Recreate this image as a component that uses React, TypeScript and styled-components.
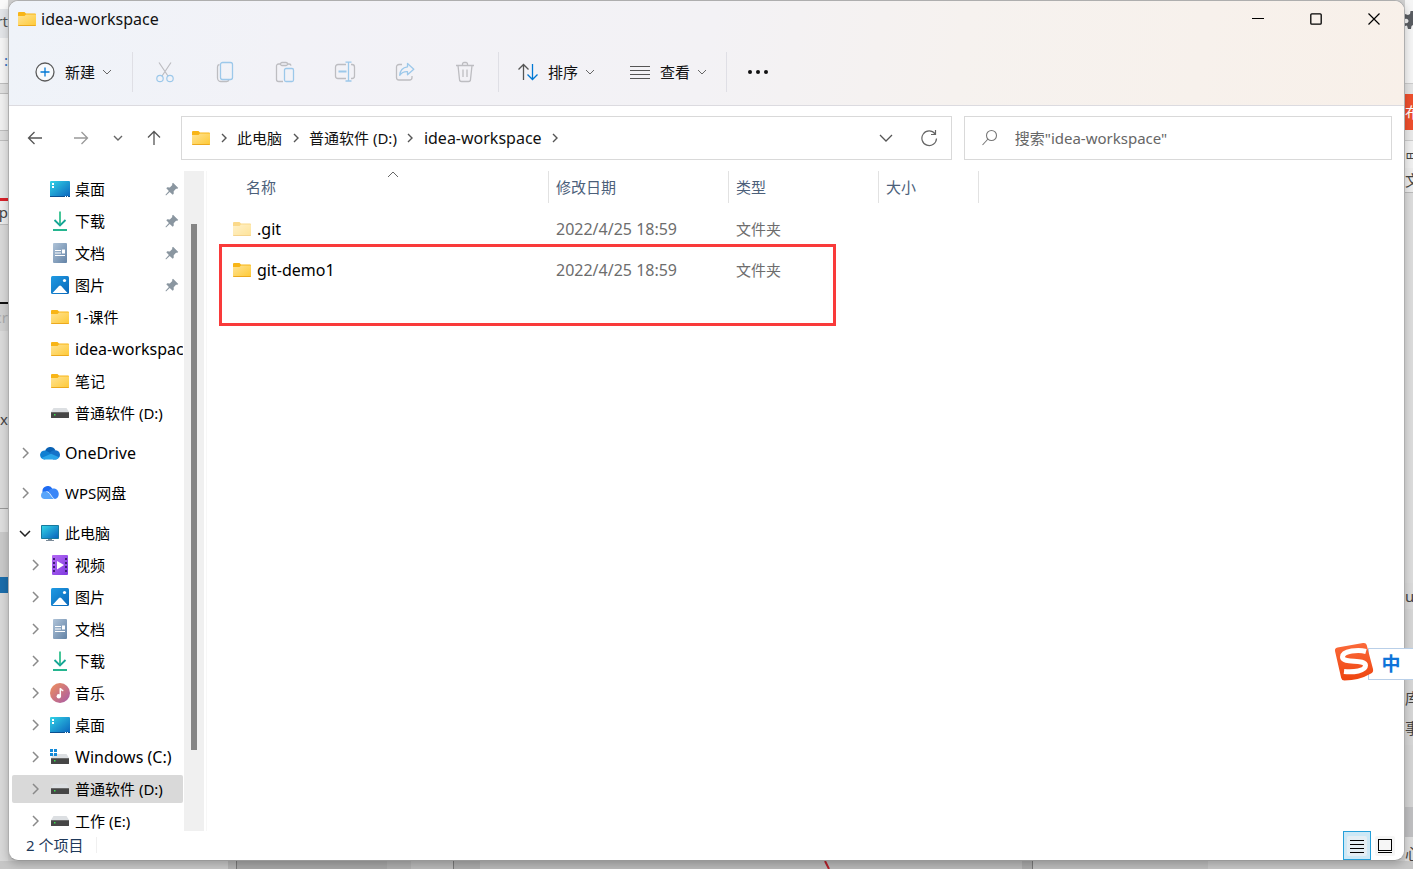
import React from "react";
import styled, { createGlobalStyle } from "styled-components";

const GlobalStyle = createGlobalStyle`
  * { box-sizing: border-box; }
  body {
    margin: 0;
    font-family: "Noto Sans", "Noto Sans CJK SC", sans-serif;
    font-size: 15px;
    color: #111;
  }
  button {
    border: 0;
    padding: 0;
    background: none;
    font: inherit;
    color: inherit;
    cursor: default;
  }
  ul, ol { margin: 0; padding: 0; list-style: none; }
  svg { display: block; flex: none; }
`;

/* ---------- desktop behind the window ---------- */

const Desktop = styled.div`
  position: relative;
  display: grid;
  grid-template-columns: 8px minmax(0, 1fr) 8px;
  grid-template-rows: minmax(0, 1fr) 8px;
  height: 100vh;
  overflow: hidden;
  background: #d2d2d2;
`;

const SideStrip = styled.div`
  display: flex;
  flex-direction: column;
  min-height: 0;
  overflow: hidden;
`;

const BottomStrip = styled.div`
  grid-column: 1 / -1;
  display: flex;
  overflow: hidden;
`;

const Patch = styled.div<{ $h: number; $bg: string; $color?: string; $side?: string }>`
  flex: none;
  height: ${(p) => p.$h}px;
  background: ${(p) => p.$bg};
  color: ${(p) => p.$color || "#444"};
  display: flex;
  align-items: center;
  justify-content: ${(p) => p.$side || "flex-end"};
  overflow: hidden;
  white-space: nowrap;
  line-height: 1;
`;

const Band = styled.div<{ $w?: number; $bg: string }>`
  flex: ${(p) => (p.$w ? `none` : `1`)};
  width: ${(p) => (p.$w ? `${p.$w}px` : "auto")};
  background: ${(p) => p.$bg};
  display: flex;
  justify-content: flex-end;
`;

/* ---------- window frame ---------- */

const Window = styled.main`
  position: relative;
  z-index: 1;
  display: flex;
  flex-direction: column;
  min-width: 0;
  min-height: 0;
  background: #fff;
  border: 1px solid #aeaeae;
  border-bottom-color: #999;
  border-radius: 10px;
  overflow: hidden;
  box-shadow: 0 3px 8px rgba(0, 0, 0, 0.22);
`;

const Header = styled.header`
  flex: none;
  border-bottom: 1px solid #dcdbe0;
  background: linear-gradient(100deg, #eff3f9 0%, #f2f2f7 20%, #f3f2f5 50%, #f6f2ef 68%, #f7f1ec 85%, #f8f0e9 100%);
`;

const TitleBar = styled.div`
  display: flex;
  align-items: center;
  height: 36px;
  padding: 0 1px 0 9px;
`;

const Title = styled.h1`
  flex: 1;
  margin: 0 0 0 5px;
  font-size: 16px;
  line-height: 20px;
  font-weight: 400;
`;

const CaptionButton = styled.button`
  display: grid;
  place-items: center;
  width: 58px;
  height: 36px;
`;

const Toolbar = styled.div`
  display: flex;
  align-items: center;
  height: 68px;
  padding: 1px 0 0 18px;
`;

const Command = styled.button<{ $w: number }>`
  display: flex;
  align-items: center;
  gap: 7px;
  width: ${(p) => p.$w}px;
  height: 40px;
  padding-left: 8px;
  & > span { margin-left: 3px; }
`;

const IconCommand = styled.button`
  display: grid;
  place-items: center;
  width: 60px;
  height: 40px;
`;

const Divider = styled.span<{ $before?: number; $after: number }>`
  width: 1px;
  height: 40px;
  margin: 0 ${(p) => p.$after}px 0 ${(p) => p.$before || 0}px;
  background: #dfdfe5;
`;

/* ---------- address row ---------- */

const AddressRow = styled.div`
  flex: none;
  display: flex;
  align-items: center;
  height: 65px;
  padding: 0 12px 1px 9px;
`;

const Fields = styled.div`
  flex: 1;
  min-width: 0;
  display: grid;
  grid-template-columns: minmax(0, 9fr) minmax(0, 5fr);
  gap: 12px;
`;

const NavButton = styled.button<{ $w: number }>`
  flex: none;
  display: grid;
  place-items: center;
  width: ${(p) => p.$w}px;
  height: 40px;
`;

const AddressBox = styled.nav`
  display: flex;
  align-items: center;
  height: 44px;
  padding-left: 10px;
  border: 1px solid #d9d9d9;
`;

const Crumbs = styled.ol`
  flex: 1;
  display: flex;
  align-items: center;
  white-space: nowrap;
  li { display: flex; align-items: center; }
`;

const Crumb = styled.a<{ $size?: number }>`
  font-size: ${(p) => p.$size || 15}px;
  line-height: 20px;
  color: #111;
  text-decoration: none;
`;

const CrumbArrow = styled.span`
  display: grid;
  place-items: center;
  width: 27px;
  height: 20px;
`;

const SearchBox = styled.label`
  display: flex;
  align-items: center;
  gap: 16px;
  height: 44px;
  padding-left: 16px;
  border: 1px solid #d9d9d9;
`;

const SearchInput = styled.input`
  flex: 1;
  min-width: 0;
  border: 0;
  padding: 0;
  outline: 0;
  background: none;
  font: inherit;
  color: #111;
  &::placeholder { color: #666; opacity: 1; }
`;

/* ---------- body ---------- */

const Body = styled.div`
  flex: 1;
  min-height: 0;
  display: flex;
`;

const Sidebar = styled.aside`
  flex: none;
  display: flex;
  width: 198px;
  border-right: 1px solid #f7f7f7;
  overflow: hidden;
`;

const Tree = styled.ul`
  width: 175px;
  padding: 2px 0 0 3px;
  overflow: hidden;
`;

const TreeRow = styled.li<{ $spaced?: boolean }>`
  margin-top: ${(p) => (p.$spaced ? 8 : 0)}px;
  padding: 2px 0;
`;

const TreeButton = styled.button<{ $top?: boolean; $selected?: boolean }>`
  display: flex;
  align-items: center;
  width: 171px;
  height: 28px;
  padding-left: ${(p) => (p.$top ? 5 : 15)}px;
  border-radius: 2px;
  background: ${(p) => (p.$selected ? "#d9d9d9" : "transparent")};
  line-height: 20px;
  white-space: nowrap;
  text-align: left;
`;

const Slot = styled.span<{ $w: number; $gap?: number }>`
  flex: none;
  display: grid;
  place-items: center;
  width: ${(p) => p.$w}px;
  margin-left: ${(p) => p.$gap || 0}px;
`;

const TreeLabel = styled.span<{ $latin: boolean }>`
  flex: 1;
  min-width: 0;
  margin-left: 5px;
  overflow: hidden;
  font-size: ${(p) => (p.$latin ? 16 : 15)}px;
  color: #000;
`;

const ScrollTrack = styled.div`
  width: 20px;
  padding: 53px 7px 0;
  background: #f0f0f0;
`;

const ScrollThumb = styled.div`
  width: 6px;
  height: 526px;
  background: #858585;
`;

const Files = styled.section`
  position: relative;
  flex: 1;
  min-width: 0;
  padding-left: 2px;
`;

const FileTable = styled.table`
  table-layout: fixed;
  width: 770px;
  border-collapse: separate;
  border-spacing: 0;
  tbody::before {
    content: "";
    display: block;
    height: 5px;
  }
`;

const Th = styled.th<{ $w: number; $pad: number }>`
  position: relative;
  width: ${(p) => p.$w}px;
  height: 32px;
  padding: 0 0 2px ${(p) => p.$pad}px;
  border-right: 1px solid #e2e2e2;
  text-align: left;
  font-weight: 400;
  color: #4c607a;
  svg {
    position: absolute;
    top: 0;
    left: 178px;
  }
`;

const Td = styled.td<{ $pad: number; $size?: number }>`
  height: 41px;
  padding: 0 0 0 ${(p) => p.$pad}px;
  font-size: ${(p) => p.$size || 15}px;
  line-height: 20px;
  color: #6d6d6d;
`;

const FileName = styled.span`
  display: flex;
  align-items: center;
  gap: 6px;
  color: #000;
`;

const Highlight = styled.div`
  position: absolute;
  top: 73px;
  left: 12px;
  width: 617px;
  height: 82px;
  border: 3px solid #f93a3a;
  pointer-events: none;
`;

const StatusBar = styled.footer`
  flex: none;
  display: flex;
  align-items: center;
  height: 29px;
  padding: 0 5px 0 17px;
  color: #1e395b;
`;

const Count = styled.span`
  width: 71px;
  height: 16px;
  margin: 0 auto 2px 0;
  border-right: 1px solid #f0f0f0;
  line-height: 16px;
`;

const ViewButton = styled.button<{ $on?: boolean }>`
  display: grid;
  place-items: center;
  width: 28px;
  height: 29px;
  border: 1px solid ${(p) => (p.$on ? "#26a0da" : "transparent")};
  background: ${(p) => (p.$on ? "#cce8f6" : "transparent")};
`;

/* ---------- input method badge ---------- */

const ImeBadge = styled.div`
  position: absolute;
  z-index: 2;
  right: 0;
  top: 642px;
  display: flex;
  align-items: center;
  height: 40px;
`;

const ImeMode = styled.button`
  width: 45px;
  height: 32px;
  margin: 4px 0 0 -6px;
  border: 1px solid #b9cfe8;
  border-right: 0;
  background: #fff;
  color: #0f74d9;
  font-size: 19px;
  line-height: 20px;
  font-weight: 700;
`;

const ImeLogo = styled.svg`
  position: relative;
`;

/* ---------- icons ---------- */

const Folder = ({ faded }: { faded?: boolean }) => (
  <svg width="18" height="14" viewBox="0 0 18 14" opacity={faded ? 0.5 : 1}>
    <defs>
      <linearGradient id="folderFace" x1="0" y1="0" x2="1" y2="1">
        <stop offset="0" stopColor="#ffe394" />
        <stop offset="1" stopColor="#fec935" />
      </linearGradient>
    </defs>
    <path d="M0 1a1 1 0 0 1 1-1h5.500L8 1.500h9a1 1 0 0 1 1 1V8H0z" fill="#f8b517" />
    <path d="M0 4h6.500L8 2.500h10V13a1 1 0 0 1-1 1H1a1 1 0 0 1-1-1z" fill="url(#folderFace)" />
    <path d="M0 13h18a1 1 0 0 1-1 1H1a1 1 0 0 1-1-1z" fill="#eca91e" />
  </svg>
);

const Chevron = ({ dir, size = 8, color = "#666", w = 1 }: { dir: "down" | "right" | "up"; size?: number; color?: string; w?: number }) => {
  const h = size / 2;
  const shapes = {
    down: { vb: [size + 2, h + 2], d: `M1 1l${h} ${h} ${h} ${-h}` },
    up: { vb: [size + 2, h + 2], d: `M1 ${h + 1}l${h} ${-h} ${h} ${h}` },
    right: { vb: [h + 2, size + 2], d: `M1 1l${h} ${h} ${-h} ${h}` },
  };
  const s = shapes[dir];
  return (
    <svg width={s.vb[0]} height={s.vb[1]} viewBox={`0 0 ${s.vb[0]} ${s.vb[1]}`} fill="none" stroke={color} strokeWidth={w}>
      <path d={s.d} />
    </svg>
  );
};

const GREY = "#bdbdc1";
const BLUE = "#9cc8ea";

const PlusIcon = () => (
  <svg width="20" height="20" viewBox="0 0 20 20" fill="none">
    <circle cx="10" cy="10" r="9" stroke="#5c5c5c" strokeWidth="1.300" fill="#f8fafc" />
    <path d="M10 5.500v9M5.500 10h9" stroke="#0078d4" strokeWidth="1.300" />
  </svg>
);

const CutIcon = () => (
  <svg width="20" height="22" viewBox="0 0 20 22" fill="none" strokeWidth="1.200">
    <path d="M4 1.500l9 13.500M16 1.500L7 15" stroke={GREY} />
    <circle cx="5" cy="17.500" r="3.200" stroke={BLUE} />
    <circle cx="15" cy="17.500" r="3.200" stroke={BLUE} />
  </svg>
);

const CopyIcon = () => (
  <svg width="18" height="22" viewBox="0 0 18 22" fill="none" strokeWidth="1.300">
    <path d="M3.500 3.500A2.500 2.500 0 0 0 1.500 6v11a3.500 3.500 0 0 0 3.500 3.500h5.500a2.500 2.500 0 0 0 2.400-1.800" stroke={GREY} />
    <rect x="4.500" y="1.500" width="12" height="17" rx="2" stroke={BLUE} />
  </svg>
);

const PasteIcon = () => (
  <svg width="20" height="22" viewBox="0 0 20 22" fill="none" strokeWidth="1.300">
    <path d="M6 3H3.500a2 2 0 0 0-2 2v13.500a2 2 0 0 0 2 2H8M12.500 3H14a2 2 0 0 1 2 1.700" stroke={GREY} />
    <rect x="5.500" y="1.500" width="7" height="3" rx="1.500" stroke={GREY} />
    <rect x="9.500" y="7.500" width="9" height="13" rx="1.500" stroke={BLUE} />
  </svg>
);

const RenameIcon = () => (
  <svg width="22" height="22" viewBox="0 0 22 22" fill="none" strokeWidth="1.300">
    <path d="M12 3.500H4A2.500 2.500 0 0 0 1.500 6v9A2.500 2.500 0 0 0 4 17.500h8M17 3.500h1A2.500 2.500 0 0 1 20.500 6v9a2.500 2.500 0 0 1-2.500 2.500h-1" stroke={GREY} />
    <path d="M14.500 1.500v18M11.500 1.200h6M11.500 20h6" stroke={BLUE} />
    <path d="M4.500 10.500h8" stroke={BLUE} strokeWidth="2" />
  </svg>
);

const ShareIcon = () => (
  <svg width="20" height="20" viewBox="0 0 20 20" fill="none" strokeWidth="1.300" strokeLinejoin="round">
    <path d="M7 2.500H4A2.500 2.500 0 0 0 1.500 5v10.500A2.500 2.500 0 0 0 4 18h10.500a2.500 2.500 0 0 0 2.500-2.500V14" stroke={GREY} />
    <path d="M12.500 1.500l6.300 5.700-6.300 5.600V9.700c-3.500-.2-6 1-7.800 3.600.3-4.600 3-7.900 7.800-8.500z" stroke={BLUE} />
  </svg>
);

const DeleteIcon = () => (
  <svg width="20" height="22" viewBox="0 0 20 22" fill="none" stroke={GREY} strokeWidth="1.300">
    <path d="M1 4.500h18M7.500 4V3a1.500 1.500 0 0 1 1.500-1.500h2A1.500 1.500 0 0 1 12.500 3v1M3 4.500l1.500 14a2 2 0 0 0 2 2h7a2 2 0 0 0 2-2L17 4.500M8 8.500v7.500M12 8.500v7.500" />
  </svg>
);

const SortIcon = () => (
  <svg width="20" height="18" viewBox="0 0 20 18" fill="none" strokeWidth="1.300">
    <path d="M5.500 17V1.500M.5 6.500l5-5 5 5" stroke="#555" />
    <path d="M14.500 1v15.500M9.500 11.500l5 5 5-5" stroke="#0078d4" />
  </svg>
);

const LinesIcon = () => (
  <svg width="20" height="14" viewBox="0 0 20 14" stroke="#555">
    <path d="M0 1.500h20M0 5.500h20M0 9.500h20M0 13.500h20" />
  </svg>
);

const DotsIcon = () => (
  <svg width="22" height="6" viewBox="0 0 22 6" fill="#111">
    <circle cx="3" cy="3" r="2" />
    <circle cx="11" cy="3" r="2" />
    <circle cx="19" cy="3" r="2" />
  </svg>
);

const ArrowIcon = ({ turn, color }: { turn: number; color: string }) => (
  <svg width="16" height="16" viewBox="0 0 16 16" fill="none" stroke={color} strokeWidth="1.300">
    <path d="M15 8H1.500M7.500 2l-6 6 6 6" transform={`rotate(${turn} 8 8)`} />
  </svg>
);

const RefreshIcon = () => (
  <svg width="18" height="18" viewBox="0 0 18 18" fill="none" stroke="#666" strokeWidth="1.200">
    <path d="M16.500 9.500A7.300 7.300 0 1 1 15 4.800M15.500 1v4.500H11" />
  </svg>
);

const MagnifierIcon = () => (
  <svg width="18" height="18" viewBox="0 0 18 18" fill="none" stroke="#777" strokeWidth="1.100">
    <circle cx="10.500" cy="6.500" r="5" />
    <path d="M7 10l-5.500 6" />
  </svg>
);

const DesktopIcon = () => (
  <svg width="20" height="16" viewBox="0 0 20 16">
    <defs>
      <linearGradient id="deskFace" x1="0" y1="0" x2="1" y2="1">
        <stop offset="0" stopColor="#32d3e6" />
        <stop offset="1" stopColor="#0a63bd" />
      </linearGradient>
    </defs>
    <rect width="20" height="16" rx="1" fill="url(#deskFace)" />
    <path d="M2 2h2v2H2zM2 5h2v2H2z" fill="#fff" />
    <path d="M0 15h20v1H0z" fill="#0b4f8f" />
    <path d="M15 15h1v1h-1zM17 15h1v1h-1z" fill="#fff" />
  </svg>
);

const DownloadIcon = () => (
  <svg width="16" height="20" viewBox="0 0 16 20" fill="none" strokeWidth="1.800">
    <path d="M8 .5v14" stroke="#33c08e" />
    <path d="M2.500 9L8 14.500 13.500 9" stroke="#16a596" />
    <path d="M1 19h14" stroke="#24b58f" strokeWidth="2" />
  </svg>
);

const DocumentIcon = () => (
  <svg width="14" height="20" viewBox="0 0 14 20">
    <defs>
      <linearGradient id="docFace" x1="0" y1="0" x2="1" y2="1">
        <stop offset="0" stopColor="#afc3d8" />
        <stop offset="1" stopColor="#6383a6" />
      </linearGradient>
    </defs>
    <rect width="14" height="20" rx="1" fill="url(#docFace)" />
    <path d="M2 7h6v1H2zM2 9.500h6v1H2zM2 12h10v1H2zM9 6.500h3v4H9z" fill="#fff" />
  </svg>
);

const PictureIcon = () => (
  <svg width="18" height="18" viewBox="0 0 18 18">
    <defs>
      <linearGradient id="picFace" x1="0" y1="0" x2="1" y2="1">
        <stop offset="0" stopColor="#1f9be3" />
        <stop offset="1" stopColor="#0a67b9" />
      </linearGradient>
    </defs>
    <rect width="18" height="18" rx="1.500" fill="url(#picFace)" />
    <path d="M1.500 17L8 10a1.500 1.500 0 0 1 2.200 0L16.500 17z" fill="#fff" />
    <circle cx="13.500" cy="4.500" r="1.600" fill="#fff" />
  </svg>
);

const DriveIcon = ({ system }: { system?: boolean }) => (
  <svg width="20" height={system ? 20 : 10} viewBox={system ? "0 -7 20 20" : "0 0 20 10"}>
    <path d="M3.500 0h13L19 4H1z" fill="#dcdfe2" />
    <rect x="1" y="4" width="18" height="6" rx=".5" fill="#464646" />
    <rect x="1" y="4" width="18" height="1" fill="#6a6a6a" />
    <rect x="4" y="6" width="1.500" height="1.500" fill="#39e04d" />
    {system && <path d="M0-5h3v3H0zM4-5h3v3H4zM0-1h3v3H0zM4-1h3v3H4z" fill="#1489d8" />}
  </svg>
);

const CloudIcon = () => (
  <svg width="20" height="14" viewBox="0 0 20 14">
    <path d="M5 5.500A5.500 5.500 0 0 1 15.300 4L12 9.500z" fill="#0a62b4" />
    <path d="M4.500 13.500A4.500 4.500 0 1 1 7 5.200L14 9z" fill="#1080d2" />
    <path d="M14.500 4.200A4.700 4.700 0 0 1 16 13.500h-3L9.500 7.500c1-2 2.500-3.200 5-3.300z" fill="#1673c9" />
    <path d="M1.500 12L11 7.800l8 3.500a4 4 0 0 1-3 2.200H4.500a4 4 0 0 1-3-1.500z" fill="#2aa5ea" />
  </svg>
);

const WpsCloudIcon = () => (
  <svg width="20" height="14" viewBox="0 0 20 14">
    <path d="M2.500 6A5.300 5.300 0 0 1 12.500 3L9 6z" fill="#1f6cf2" />
    <path d="M8 5.500C10 2 14.500 1.500 17 3.800c3 3 2 8.700-2 9.200H12z" fill="#3a86f7" />
    <path d="M1 9.500C1 5.500 5.500 4 8.500 6.500c2.500 2.200 3 4.500 5.500 6.500H4.500C2.500 13 1 11.500 1 9.500z" fill="#58a5fb" />
    <path d="M6.500 5.500c4 .5 4.500 6 8 7.500" stroke="#fff" strokeWidth=".8" fill="none" />
  </svg>
);

const ComputerIcon = () => (
  <svg width="18" height="16" viewBox="0 0 18 16">
    <rect width="18" height="14" rx=".8" fill="#167a9e" />
    <rect x="1" y="1" width="16" height="12" fill="url(#deskFace)" />
    <path d="M7 14h4v1h2v1H5v-1h2z" fill="#7c8b99" />
  </svg>
);

const VideoIcon = () => (
  <svg width="16" height="20" viewBox="0 0 16 20">
    <defs>
      <linearGradient id="vidFace" x1="0" y1="0" x2="1" y2="1">
        <stop offset="0" stopColor="#b56af5" />
        <stop offset="1" stopColor="#7f3ae0" />
      </linearGradient>
    </defs>
    <rect width="16" height="20" rx="1" fill="url(#vidFace)" />
    <path d="M2 3v15M14 3v15" stroke="#3f1d78" strokeWidth="2" strokeDasharray="2 2" />
    <path d="M5 6l7 4-7 4.500z" fill="#fff" />
  </svg>
);

const MusicIcon = () => (
  <svg width="20" height="20" viewBox="0 0 20 20">
    <defs>
      <linearGradient id="musFace" x1="0" y1="0" x2="1" y2="1">
        <stop offset="0" stopColor="#f0905a" />
        <stop offset="1" stopColor="#a75aa8" />
      </linearGradient>
    </defs>
    <circle cx="10" cy="10" r="10" fill="url(#musFace)" />
    <circle cx="8.800" cy="13.200" r="2.200" fill="#fff" />
    <path d="M10.300 13.500V5.200c.5 1.600 1.400 2 3 2.600" fill="none" stroke="#fff" strokeWidth="1.500" />
  </svg>
);

const PinIcon = () => (
  <svg width="14" height="14" viewBox="0 0 14 14">
    <path d="M8 .8l5.300 5.200-1 .8-1.300-.1-2.300 2.600v2.500l-1 1-3-2.900L1 13.400l-.5-.6 3.400-3.700L1.300 6.300l1-1 2.500.1L7.300 3 7.100 1.700z" fill="#8a96a0" />
  </svg>
);

const GearIcon = () => (
  <svg width="8" height="20" viewBox="0 0 8 20">
    <path d="M8 1H5.500L5 4 3 5 0 4v5c2-1 3.500.5 3.500 2S2 14 0 13v3l2-.5L3 19h3l.5-3L8 15z" fill="#5a5d62" />
  </svg>
);

/* ---------- data ---------- */

type Icon = React.ReactNode;
interface TreeItem {
  label: string;
  icon: Icon;
  pin?: boolean;
  arrow?: "right" | "down";
  top?: boolean;
  selected?: boolean;
}

const treeItems: TreeItem[] = [
  { label: "桌面", icon: <DesktopIcon />, pin: true },
  { label: "下载", icon: <DownloadIcon />, pin: true },
  { label: "文档", icon: <DocumentIcon />, pin: true },
  { label: "图片", icon: <PictureIcon />, pin: true },
  { label: "1-课件", icon: <Folder /> },
  { label: "idea-workspace", icon: <Folder /> },
  { label: "笔记", icon: <Folder /> },
  { label: "普通软件 (D:)", icon: <DriveIcon /> },
  { label: "OneDrive", icon: <CloudIcon />, arrow: "right", top: true },
  { label: "WPS网盘", icon: <WpsCloudIcon />, arrow: "right", top: true },
  { label: "此电脑", icon: <ComputerIcon />, arrow: "down", top: true },
  { label: "视频", icon: <VideoIcon />, arrow: "right" },
  { label: "图片", icon: <PictureIcon />, arrow: "right" },
  { label: "文档", icon: <DocumentIcon />, arrow: "right" },
  { label: "下载", icon: <DownloadIcon />, arrow: "right" },
  { label: "音乐", icon: <MusicIcon />, arrow: "right" },
  { label: "桌面", icon: <DesktopIcon />, arrow: "right" },
  { label: "Windows (C:)", icon: <DriveIcon system />, arrow: "right" },
  { label: "普通软件 (D:)", icon: <DriveIcon />, arrow: "right", selected: true },
  { label: "工作 (E:)", icon: <DriveIcon />, arrow: "right" },
];

const isLatin = (s: string) => /^[\x20-\x7e]+$/.test(s);

const files = [
  { name: ".git", date: "2022/4/25 18:59", type: "文件夹", faded: true },
  { name: "git-demo1", date: "2022/4/25 18:59", type: "文件夹", faded: false },
];

const columns = [
  { label: "名称", w: 340, pad: 37 },
  { label: "修改日期", w: 180, pad: 7 },
  { label: "类型", w: 150, pad: 7 },
  { label: "大小", w: 100, pad: 7 },
];

interface PatchData { h: number; bg: string; text?: React.ReactNode; color?: string }

const leftPatches: PatchData[] = [
  { h: 9, bg: "#fafafa" },
  { h: 24, bg: "#e3e5e8", text: "rt", color: "#555" },
  { h: 5, bg: "#e3e5e8" },
  { h: 45, bg: "#f5f5f5", text: ":", color: "#2a6ac0" },
  { h: 1, bg: "#bdbdbd" },
  { h: 9, bg: "#e0e0e0" },
  { h: 1, bg: "#bdbdbd" },
  { h: 36, bg: "#f0f0f0" },
  { h: 1, bg: "#bdbdbd" },
  { h: 9, bg: "#dddddd" },
  { h: 1, bg: "#bdbdbd" },
  { h: 57, bg: "#e6e6e6" },
  { h: 3, bg: "#d8222a" },
  { h: 23, bg: "#ececec", text: "p" },
  { h: 1, bg: "#bbbbbb" },
  { h: 77, bg: "#d8d8d8" },
  { h: 2, bg: "#111111" },
  { h: 27, bg: "#d0d0d0", text: "cr", color: "#aaaaaa" },
  { h: 177, bg: "#dadada", text: "x" },
  { h: 1, bg: "#999999" },
  { h: 23, bg: "#dedede" },
  { h: 45, bg: "#c9c9c9" },
  { h: 16, bg: "#1b6dab" },
  { h: 268, bg: "#d8d8d8" },
];

const rightPatches: PatchData[] = [
  { h: 10, bg: "#f5f5f5" },
  { h: 20, bg: "#f5f5f5", text: <GearIcon /> },
  { h: 53, bg: "#f5f5f5" },
  { h: 1, bg: "#cccccc" },
  { h: 10, bg: "#e4e4e4" },
  { h: 36, bg: "#ee4f2d", text: "布", color: "#ffffff" },
  { h: 10, bg: "#e9e9e9" },
  { h: 1, bg: "#cccccc" },
  { h: 10, bg: "#f0f0f0" },
  { h: 17, bg: "#f0f0f0", text: "罒" },
  { h: 24, bg: "#ececec", text: "文" },
  { h: 1, bg: "#bbbbbb" },
  { h: 390, bg: "#dcdcdc" },
  { h: 26, bg: "#dadada", text: "u" },
  { h: 76, bg: "#d6d6d6" },
  { h: 26, bg: "#d6d6d6", text: "库" },
  { h: 34, bg: "#d6d6d6", text: "事" },
  { h: 62, bg: "#d4d4d4" },
  { h: 30, bg: "#bfbfc1" },
  { h: 32, bg: "#dddddd", text: "心" },
];

const Strip = ({ patches, side }: { patches: PatchData[]; side: string }) => (
  <SideStrip aria-hidden>
    {patches.map((p, i) => (
      <Patch key={i} $h={p.h} $bg={p.bg} $color={p.color} $side={side}>
        {p.text}
      </Patch>
    ))}
  </SideStrip>
);

export default function App() {
  return (
    <Desktop>
      <GlobalStyle />
      <Strip patches={leftPatches} side="flex-end" />

      <Window>
        <Header>
          <TitleBar>
            <Folder />
            <Title>idea-workspace</Title>
            <CaptionButton aria-label="最小化">
              <svg width="12" height="12" viewBox="0 0 12 12" stroke="#000"><path d="M0 5.500h12" /></svg>
            </CaptionButton>
            <CaptionButton aria-label="最大化">
              <svg width="12" height="12" viewBox="0 0 12 12" fill="none" stroke="#000" strokeWidth="1.300"><rect x=".8" y=".8" width="10.400" height="10.400" rx="1" /></svg>
            </CaptionButton>
            <CaptionButton aria-label="关闭">
              <svg width="12" height="12" viewBox="0 0 12 12" stroke="#000" strokeWidth="1.200"><path d="M.5.5l11 11M11.500.5l-11 11" /></svg>
            </CaptionButton>
          </TitleBar>
          <Toolbar>
            <Command $w={105}>
              <PlusIcon /><span>新建</span><Chevron dir="down" />
            </Command>
            <Divider $after={2} />
            <IconCommand aria-label="剪切"><CutIcon /></IconCommand>
            <IconCommand aria-label="复制"><CopyIcon /></IconCommand>
            <IconCommand aria-label="粘贴"><PasteIcon /></IconCommand>
            <IconCommand aria-label="重命名"><RenameIcon /></IconCommand>
            <IconCommand aria-label="共享"><ShareIcon /></IconCommand>
            <IconCommand aria-label="删除"><DeleteIcon /></IconCommand>
            <Divider $before={3} $after={11} />
            <Command $w={112}>
              <SortIcon /><span>排序</span><Chevron dir="down" />
            </Command>
            <Command $w={104}>
              <LinesIcon /><span>查看</span><Chevron dir="down" />
            </Command>
            <Divider $after={1} />
            <IconCommand aria-label="更多"><DotsIcon /></IconCommand>
          </Toolbar>
        </Header>

        <AddressRow>
          <NavButton $w={34} aria-label="后退"><ArrowIcon turn={0} color="#555" /></NavButton>
          <NavButton $w={58} aria-label="前进"><ArrowIcon turn={180} color="#999" /></NavButton>
          <NavButton $w={16} aria-label="最近"><Chevron dir="down" color="#666" w={1.4} /></NavButton>
          <NavButton $w={55} aria-label="上移"><ArrowIcon turn={90} color="#555" /></NavButton>
          <Fields>
            <AddressBox aria-label="路径">
              <Folder />
              <Crumbs>
                <li><CrumbArrow><Chevron dir="right" color="#555" w={1.4} /></CrumbArrow><Crumb href="#pc">此电脑</Crumb></li>
                <li><CrumbArrow><Chevron dir="right" color="#555" w={1.4} /></CrumbArrow><Crumb href="#d">普通软件 (D:)</Crumb></li>
                <li><CrumbArrow><Chevron dir="right" color="#555" w={1.4} /></CrumbArrow><Crumb $size={16} href="#idea">idea-workspace</Crumb></li>
                <li><CrumbArrow><Chevron dir="right" color="#555" w={1.4} /></CrumbArrow></li>
              </Crumbs>
              <NavButton $w={42} aria-label="展开"><Chevron dir="down" size={12} color="#555" w={1.3} /></NavButton>
              <NavButton $w={44} aria-label="刷新"><RefreshIcon /></NavButton>
            </AddressBox>
            <SearchBox>
              <MagnifierIcon />
              <SearchInput type="text" aria-label="搜索" placeholder={'搜索"idea-workspace"'} />
            </SearchBox>
          </Fields>
        </AddressRow>

        <Body>
          <Sidebar>
            <Tree>
              {treeItems.map((t, i) => (
                <TreeRow key={i} $spaced={t.top}>
                  <TreeButton $top={t.top} $selected={t.selected}>
                    <Slot $w={16}>
                      {t.arrow && <Chevron dir={t.arrow} size={10} color={t.arrow === "down" ? "#222" : "#8a8a8a"} w={1.5} />}
                    </Slot>
                    <Slot $w={20} $gap={7}>{t.icon}</Slot>
                    <TreeLabel $latin={isLatin(t.label)}>{t.label}</TreeLabel>
                    {t.pin && <Slot $w={22}><PinIcon /></Slot>}
                  </TreeButton>
                </TreeRow>
              ))}
            </Tree>
            <ScrollTrack><ScrollThumb /></ScrollTrack>
          </Sidebar>

          <Files>
            <FileTable>
              <thead>
                <tr>
                  {columns.map((c, i) => (
                    <Th key={c.label} $w={c.w} $pad={c.pad} scope="col">
                      {c.label}
                      {i === 0 && <Chevron dir="up" color="#666" size={10} />}
                    </Th>
                  ))}
                </tr>
              </thead>
              <tbody>
                {files.map((f) => (
                  <tr key={f.name}>
                    <Td $pad={24} $size={16}><FileName><Folder faded={f.faded} />{f.name}</FileName></Td>
                    <Td $pad={7} $size={16}>{f.date}</Td>
                    <Td $pad={7}>{f.type}</Td>
                    <Td $pad={7} />
                  </tr>
                ))}
              </tbody>
            </FileTable>
            <Highlight />
          </Files>
        </Body>

        <StatusBar>
          <Count>2 个项目</Count>
          <ViewButton $on aria-label="详细信息">
            <svg width="20" height="20" viewBox="0 0 20 20" stroke="#000"><rect width="20" height="20" rx="2" fill="#e4eef4" stroke="none" /><path d="M3 4.500h14M3 8.500h14M3 12.500h14M3 16.500h14" /></svg>
          </ViewButton>
          <ViewButton aria-label="大图标">
            <svg width="20" height="20" viewBox="0 0 20 20" fill="none" stroke="#000"><rect width="20" height="20" rx="2" fill="#f6f6f6" stroke="none" /><rect x="3.500" y="3.500" width="13" height="11" /><path d="M3 16.500h14" /></svg>
          </ViewButton>
        </StatusBar>
      </Window>

      <Strip patches={rightPatches} side="flex-start" />

      <BottomStrip aria-hidden>
        <Band $w={228} $bg="#c6c6c6" />
        <Band $w={8} $bg="#b2b2b2" />
        <Band $w={1} $bg="#777777" />
        <Band $w={150} $bg="#a6a6a6" />
        <Band $w={24} $bg="#aeaeae" />
        <Band $w={42} $bg="#b8b8b8" />
        <Band $w={1} $bg="#777777" />
        <Band $w={26} $bg="#acacac" />
        <Band $w={352} $bg="#b8b8b8">
          <svg width="8" height="8" viewBox="0 0 8 8"><path d="M1 0l4 8" stroke="#b3202a" strokeWidth="2" /></svg>
        </Band>
        <Band $w={190} $bg="#b8b8b8" />
        <Band $w={10} $bg="#a9a9a9" />
        <Band $w={1} $bg="#777777" />
        <Band $w={175} $bg="#bcbcbc" />
        <Band $bg="#c6c6c6" />
      </BottomStrip>

      <ImeBadge>
        <ImeLogo width="40" height="40" viewBox="0 0 40 40">
          <defs>
            <linearGradient id="imeFace" x1="0" y1="0" x2="0" y2="1">
              <stop offset="0" stopColor="#fb6a3a" />
              <stop offset="1" stopColor="#ee4510" />
            </linearGradient>
          </defs>
          <path d="M3.500 5.500L29 1q3-.5 3.700 2L39 27q.7 3-2 4.500Q25 38.500 10.500 38.500q-2.700 0-3.300-2.500L1 9q-.5-3 2.500-3.500z" fill="url(#imeFace)" />
          <path d="M32 9.500C25 7.500 8.500 8.500 8.500 15 8.500 22 31.500 16.500 31.500 23.500c0 5.500-12 7-21.500 6" fill="none" stroke="#fff" strokeWidth="5" />
        </ImeLogo>
        <ImeMode>中</ImeMode>
      </ImeBadge>
    </Desktop>
  );
}
